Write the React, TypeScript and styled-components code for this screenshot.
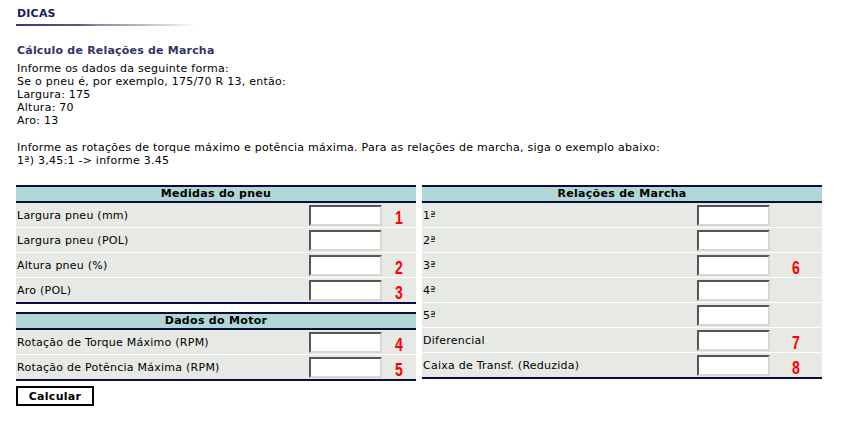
import React from "react";
import styled, { createGlobalStyle } from "styled-components";

const Global = createGlobalStyle`
  html, body { margin: 0; padding: 0; background: #ffffff; }
  body {
    font-family: "DejaVu Sans", Verdana, sans-serif;
    font-size: 11px;
    color: #000;
  }
`;

const Page = styled.div`
  width: 841px;
  height: 437px;
  box-sizing: border-box;
  padding: 7px 0 0 16px;
  overflow: hidden;
`;

const SectionTitle = styled.div`
  font-weight: bold;
  font-size: 11px;
  line-height: 13px;
  color: #1a1a66;
  padding-left: 1px;
  letter-spacing: 0.2px;
`;

const Divider = styled.div`
  margin-top: 4px;
  width: 180px;
  height: 2px;
  background: linear-gradient(to right, #3a3a6e 0%, #5a5a80 35%, #8a8aa0 45%, #b8b8c8 70%, #ffffff 100%);
`;

const Heading = styled.h1`
  margin: 18px 0 5px 1px;
  font-size: 11px;
  line-height: 13px;
  font-weight: bold;
  color: #333366;
  letter-spacing: 0.2px;
`;

const Paragraph = styled.p`
  margin: 0 0 14px 1px;
  line-height: 13px;
  letter-spacing: 0.25px;
`;

const Tables = styled.div`
  margin-top: 18px;
  display: flex;
  gap: 6px;
  align-items: flex-start;
`;

const Column = styled.div`
  display: flex;
  flex-direction: column;
  gap: 8px;
  width: 400px;
`;

const Panel = styled.div`
  width: 400px;
  border-top: 2px solid #0c0c40;
  border-bottom: 2px solid #0c0c40;
`;

const PanelHeader = styled.div`
  height: 14px;
  line-height: 14px;
  background: #b0d7d6;
  border-bottom: 2px solid #0c0c40;
  text-align: center;
  font-weight: bold;
  letter-spacing: 0.3px;
`;

const Row = styled.div<{ $label: number; $num: number }>`
  display: grid;
  grid-template-columns: ${(p) => p.$label}px 73px ${(p) => p.$num}px;
  align-items: center;
  height: 24px;
  background: #e7e9e4;
  & + & {
    border-top: 1px solid #ffffff;
  }
`;

const Label = styled.span`
  padding-left: 1px;
  letter-spacing: 0.25px;
  white-space: nowrap;
`;

const Field = styled.input`
  box-sizing: border-box;
  width: 73px;
  height: 21px;
  margin: 0;
  padding: 0 2px;
  background: #fff;
  border: 2px solid;
  border-color: #555555 #d8d8d0 #d8d8d0 #555555;
  outline: none;
  font: inherit;
`;

const Marker = styled.span`
  justify-self: center;
  display: inline-block;
  transform: translateY(3px) scaleX(0.78);
  font-family: "Liberation Sans", Arial, sans-serif;
  font-weight: bold;
  font-size: 18px;
  line-height: 18px;
  color: #ff0000;
`;

const Button = styled.button`
  margin-top: -3px;
  align-self: flex-start;
  width: 78px;
  height: 20px;
  box-sizing: border-box;
  background: #fff;
  border: 2px solid #000;
  font-family: "DejaVu Sans", Verdana, sans-serif;
  font-size: 11px;
  font-weight: bold;
  letter-spacing: 0.3px;
  padding: 0;
  cursor: pointer;
`;

type Item = { label: string; mark?: string };

const tyre: Item[] = [
  { label: "Largura pneu (mm)", mark: "1" },
  { label: "Largura pneu (POL)" },
  { label: "Altura pneu (%)", mark: "2" },
  { label: "Aro (POL)", mark: "3" },
];

const motor: Item[] = [
  { label: "Rotação de Torque Máximo (RPM)", mark: "4" },
  { label: "Rotação de Potência Máxima (RPM)", mark: "5" },
];

const gears: Item[] = [
  { label: "1ª" },
  { label: "2ª" },
  { label: "3ª", mark: "6" },
  { label: "4ª" },
  { label: "5ª" },
  { label: "Diferencial", mark: "7" },
  { label: "Caixa de Transf. (Reduzida)", mark: "8" },
];

function Section({ title, items, label, num }: { title: string; items: Item[]; label: number; num: number }) {
  return (
    <Panel>
      <PanelHeader>{title}</PanelHeader>
      {items.map((it) => (
        <Row key={it.label} $label={label} $num={num}>
          <Label>{it.label}</Label>
          <Field type="text" />
          {it.mark ? <Marker>{it.mark}</Marker> : <span />}
        </Row>
      ))}
    </Panel>
  );
}

export default function App() {
  return (
    <>
      <Global />
      <Page>
        <SectionTitle>DICAS</SectionTitle>
        <Divider />
        <Heading>Cálculo de Relações de Marcha</Heading>
        <Paragraph>
          Informe os dados da seguinte forma:
          <br />
          Se o pneu é, por exemplo, 175/70 R 13, então:
          <br />
          Largura: 175
          <br />
          Altura: 70
          <br />
          Aro: 13
        </Paragraph>
        <Paragraph>
          Informe as rotações de torque máximo e potência máxima. Para as relações de marcha, siga o exemplo abaixo:
          <br />
          1ª) 3,45:1 -&gt; informe 3.45
        </Paragraph>
        <Tables>
          <Column>
            <Section title="Medidas do pneu" items={tyre} label={293} num={34} />
            <Section title="Dados do Motor" items={motor} label={293} num={34} />
            <Button>Calcular</Button>
          </Column>
          <Section title="Relações de Marcha" items={gears} label={275} num={52} />
        </Tables>
      </Page>
    </>
  );
}
